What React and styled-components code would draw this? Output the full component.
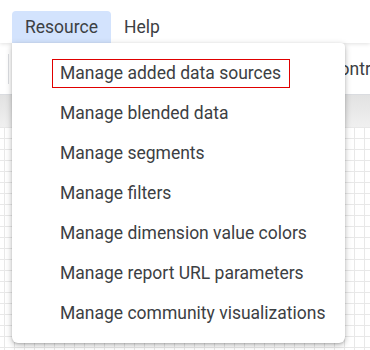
import React from 'react'
import styled, { createGlobalStyle } from 'styled-components';

const GlobalStyle = createGlobalStyle`
  html, body { margin: 0; padding: 0; }
  body {
    width: 370px;
    height: 350px;
    overflow: hidden;
    font-family: Roboto, "Liberation Sans", sans-serif;
    background: #fff;
  }
`;

const Page = styled.div`
  position: relative;
  width: 370px;
  height: 350px;
  display: flex;
  flex-direction: column;
  overflow: hidden;
`;

const MenuBar = styled.div`
  height: 43px;
  display: flex;
  align-items: flex-end;
  padding-left: 12px;
  background: #fff;
  position: relative;
  z-index: 2;
  box-shadow: 0 1px 4px rgba(0,0,0,0.12);
`;

const MenuButton = styled.div`
  height: 32px;
  padding: 0 13px;
  display: flex;
  align-items: center;
  font-size: 17.5px;
  color: #3c4043;
  border-radius: 4px 4px 0 0;
  background: ${props => props.active ? "#d3e3fd" : "transparent"};
`;

const Toolbar = styled.div`
  height: 51px;
  display: flex;
  align-items: center;
  justify-content: space-between;
  padding-left: 8px;
  background: #fff;
  border-bottom: 1px solid #dadce0;
  overflow: hidden;
`;

const Divider = styled.div`
  width: 1px;
  height: 30px;
  background: #dadce0;
`;

const ToolbarLabel = styled.div`
  font-size: 17.5px;
  color: #3c4043;
  margin-right: -24px;
  white-space: nowrap;
`;

const Band = styled.div`
  height: 32px;
  background: linear-gradient(#e2e2e2, #f0f0f0);
`;

const Canvas = styled.div`
  flex: 1;
  background-color: #fff;
  background-image:
    linear-gradient(#e8e8e8 1px, transparent 1px),
    linear-gradient(90deg, #e8e8e8 1px, transparent 1px);
  background-size: 10px 11px;
  background-position: 4px 0;
`;

const Dropdown = styled.div`
  position: absolute;
  left: 12px;
  top: 43px;
  width: 333px;
  padding: 10px 0;
  background: #fff;
  border-radius: 0 4px 6px 6px;
  box-shadow: 0 2px 6px rgba(0,0,0,0.28), 0 1px 2px rgba(0,0,0,0.12);
  z-index: 3;
`;

const Item = styled.div`
  height: 40px;
  display: flex;
  align-items: center;
  padding-left: 48px;
  font-size: 17.5px;
  color: #3c4043;
  white-space: nowrap;
`;

const ItemText = styled.span`
  padding: 4px 8px 4px 7px;
  margin-left: -8px;
  border: 1px solid ${props => props.marked ? "#e00000" : "transparent"};
  line-height: 19px;
`;

const items = [
  "Manage added data sources",
  "Manage blended data",
  "Manage segments",
  "Manage filters",
  "Manage dimension value colors",
  "Manage report URL parameters",
  "Manage community visualizations",
];

const App = () => {
  return (
    <Page>
      <GlobalStyle />
      <MenuBar>
        <MenuButton active>Resource</MenuButton>
        <MenuButton>Help</MenuButton>
      </MenuBar>
      <Toolbar>
        <Divider />
        <ToolbarLabel>Controls</ToolbarLabel>
      </Toolbar>
      <Band />
      <Canvas />
      <Dropdown>
        {items.map((label, i) => (
          <Item key={label}>
            <ItemText marked={i === 0}>{label}</ItemText>
          </Item>
        ))}
      </Dropdown>
    </Page>
  )
}

export default App
